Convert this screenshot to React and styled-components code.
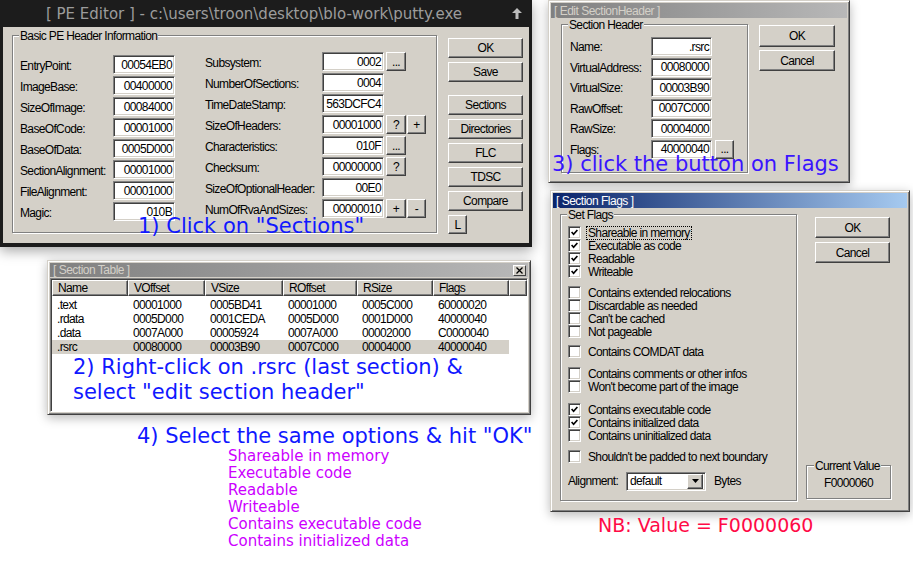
import React from 'react';
import styled, { createGlobalStyle } from 'styled-components';

const FACE = '#d4d0c8';
const SHADOW = '#808080';
const DARK = '#404040';

const GlobalStyle = createGlobalStyle`
  html, body { margin: 0; padding: 0; background: #fff; }
  body { font-family: "Liberation Sans", Arial, sans-serif; }
`;

const Desk = styled.div`
  position: relative;
  width: 913px;
  height: 563px;
  overflow: hidden;
  background: #fff;
  font-family: "Liberation Sans", Arial, sans-serif;
  font-size: 12px;
  letter-spacing: -0.65px;
  color: #000;
`;

// ---- window frames ----

const Window = styled.div`
  position: absolute;
  left: ${p => p.$x}px;
  top: ${p => p.$y}px;
  width: ${p => p.$w}px;
  height: ${p => p.$h}px;
  box-sizing: border-box;
  display: flex;
  flex-direction: column;
  background: ${FACE};
  border: 1px solid;
  border-color: ${FACE} ${DARK} ${DARK} ${FACE};
  box-shadow: inset 1px 1px #fff, inset -1px -1px ${SHADOW}, 0 3px 10px rgba(0, 0, 0, 0.28);
  padding: 2px;
`;

const TitleBar = styled.div`
  flex: none;
  height: ${p => p.$h || 15}px;
  margin-bottom: ${p => p.$mb || 0}px;
  display: flex;
  align-items: center;
  justify-content: space-between;
  padding: 0 2px 0 3px;
  background: ${p => (p.$active
    ? 'linear-gradient(90deg, #0a246a 0%, #a6caf0 100%)'
    : 'linear-gradient(90deg, #808080 0%, #b8b8b8 100%)')};
  color: ${p => (p.$active ? '#fff' : FACE)};
  font-size: 12px;
  letter-spacing: -0.5px;
  white-space: nowrap;
`;

const CloseBtn = styled.span`
  box-sizing: border-box;
  width: 13px;
  height: 11px;
  display: flex;
  align-items: center;
  justify-content: center;
  background: ${FACE};
  border: 1px solid;
  border-color: #fff ${DARK} ${DARK} #fff;
`;

const DarkWindow = styled.div`
  position: absolute;
  left: 0;
  top: 0;
  width: 532px;
  height: 247px;
  box-sizing: border-box;
  display: flex;
  flex-direction: column;
  background: #1c1c1c;
  padding: 0 3px 4px;
  box-shadow: 0 4px 12px rgba(0, 0, 0, 0.35);
`;

const DarkTitle = styled.div`
  height: 27px;
  flex: none;
  display: flex;
  align-items: center;
`;

const DarkTitleText = styled.span`
  flex: 1;
  text-align: center;
  font-family: "DejaVu Sans", sans-serif;
  font-size: 15px;
  letter-spacing: 0;
  color: #9c9c9c;
  white-space: nowrap;
`;

const TitleIcon = styled.span`
  width: 24px;
  flex: none;
  display: flex;
  justify-content: center;
`;

// ---- controls ----

const Group = styled.div`
  position: relative;
  box-sizing: border-box;
  flex: none;
  width: ${p => p.$w}px;
  height: ${p => p.$h}px;
  border: 1px solid ${SHADOW};
  box-shadow: inset 1px 1px #fff, 1px 1px #fff;
  padding: ${p => p.$pad || '0'};
  margin-top: ${p => p.$mt || 0}px;
`;

const Caption = styled.span`
  position: absolute;
  top: -6px;
  left: ${p => p.$left || 6}px;
  padding: 0 1px;
  background: ${FACE};
  line-height: 13px;
  white-space: nowrap;
`;

const Row = styled.div`
  display: flex;
  align-items: flex-start;
  height: ${p => p.$h || 21}px;
`;

const Label = styled.span`
  flex: none;
  width: ${p => p.$w}px;
  margin-top: ${p => p.$mt ?? 5}px;
  line-height: 13px;
  white-space: nowrap;
`;

const Field = styled.div`
  box-sizing: border-box;
  flex: none;
  width: ${p => p.$w || 62}px;
  height: 19px;
  display: flex;
  align-items: center;
  justify-content: ${p => (p.$left ? 'flex-start' : 'flex-end')};
  padding: 0 2px 0 3px;
  background: #fff;
  border: 1px solid;
  border-color: ${SHADOW} #fff #fff ${SHADOW};
  box-shadow: inset 1px 1px ${DARK}, inset -1px -1px ${FACE};
  white-space: nowrap;
`;

const Button = styled.button`
  box-sizing: border-box;
  flex: none;
  width: ${p => p.$w || 75}px;
  height: ${p => p.$h || 20}px;
  margin: ${p => p.$mt || 0}px 0 0 ${p => p.$ml || 0}px;
  padding: 0;
  display: flex;
  align-items: center;
  justify-content: center;
  font: inherit;
  letter-spacing: inherit;
  color: #000;
  background: ${FACE};
  border: 1px solid;
  border-color: #fff ${DARK} ${DARK} #fff;
  box-shadow: inset -1px -1px ${SHADOW};
  cursor: default;
`;

const Col = styled.div`
  display: flex;
  flex-direction: column;
  flex: none;
  width: ${p => (p.$w ? `${p.$w}px` : 'auto')};
  padding-top: ${p => p.$pt || 0}px;
  margin-left: ${p => p.$ml || 0}px;
  height: ${p => (p.$h ? `${p.$h}px` : 'auto')};
`;

const Body = styled.div`
  flex: 1;
  display: flex;
  align-items: flex-start;
  background: ${FACE};
  padding: ${p => p.$pad};
`;

const PEGroupInner = styled.div`
  display: flex;
`;

// ---- PE editor ----

const peLeft = [
  ['EntryPoint:', '00054EB0'],
  ['ImageBase:', '00400000'],
  ['SizeOfImage:', '00084000'],
  ['BaseOfCode:', '00001000'],
  ['BaseOfData:', '0005D000'],
  ['SectionAlignment:', '00001000'],
  ['FileAlignment:', '00001000'],
  ['Magic:', '010B'],
];

const peRight = [
  ['Subsystem:', '0002', ['...']],
  ['NumberOfSections:', '0004'],
  ['TimeDateStamp:', '563DCFC4'],
  ['SizeOfHeaders:', '00001000', ['?', '+']],
  ['Characteristics:', '010F', ['...']],
  ['Checksum:', '00000000', ['?']],
  ['SizeOfOptionalHeader:', '00E0'],
  ['NumOfRvaAndSizes:', '00000010', ['+', '-']],
];

const peButtons = [
  ['OK', 0], ['Save', 4], ['Sections', 13], ['Directories', 4],
  ['FLC', 4], ['TDSC', 4], ['Compare', 4],
];

function PEEditor() {
  return (
    <DarkWindow>
      <DarkTitle>
        <DarkTitleText>[ PE Editor ] - c:\users\troon\desktop\blo-work\putty.exe</DarkTitleText>
        <TitleIcon>
          <svg width="10" height="11" viewBox="0 0 10 11">
            <path d="M5 0 L10 5 H6.5 V11 H3.5 V5 H0 Z" fill="#bdbdbd" />
          </svg>
        </TitleIcon>
      </DarkTitle>
      <Body $pad="8px 0 0 9px">
        <Group $w={425} $h={198} $pad="16px 0 0 7px">
          <Caption $left={6}>Basic PE Header Information</Caption>
          <PEGroupInner>
            <Col $w={155} $pt={3}>
              {peLeft.map(([l, v]) => (
                <Row key={l}>
                  <Label $w={93}>{l}</Label>
                  <Field>{v}</Field>
                </Row>
              ))}
            </Col>
            <Col $ml={30}>
              {peRight.map(([l, v, btns]) => (
                <Row key={l}>
                  <Label $w={117}>{l}</Label>
                  <Field>{v}</Field>
                  {(btns || []).map((b, i) => (
                    <Button key={i} $w={i ? 19 : 20} $h={19} $ml={i ? 1 : 2}>{b}</Button>
                  ))}
                </Row>
              ))}
            </Col>
          </PEGroupInner>
        </Group>
        <Col $ml={11} $pt={3}>
          {peButtons.map(([b, mt]) => (
            <Button key={b} $mt={mt}>{b}</Button>
          ))}
          <Button $w={19} $h={19} $mt={4}>L</Button>
        </Col>
      </Body>
    </DarkWindow>
  );
}

// ---- Edit SectionHeader ----

const headerRows = [
  ['Name:', '.rsrc'],
  ['VirtualAddress:', '00080000'],
  ['VirtualSize:', '00003B90'],
  ['RawOffset:', '0007C000'],
  ['RawSize:', '00004000'],
  ['Flags:', '40000040', true],
];

function EditSectionHeader() {
  return (
    <Window $x={548} $y={0} $w={302} $h={183}>
      <TitleBar>[ Edit SectionHeader ]</TitleBar>
      <Body $pad="6px 0 0 10px">
        <Group $w={187} $h={149} $pad="12px 0 0 8px">
          <Caption>Section Header</Caption>
          {headerRows.map(([l, v, more]) => (
            <Row key={l} $h={20.6}>
              <Label $w={81} $mt={4}>{l}</Label>
              <Field $w={61}>{v}</Field>
              {more && <Button $w={19} $h={19} $ml={3}>...</Button>}
            </Row>
          ))}
        </Group>
        <Col $ml={11} $pt={1}>
          <Button $w={76} $h={22}>OK</Button>
          <Button $w={76} $h={21} $mt={3}>Cancel</Button>
        </Col>
      </Body>
    </Window>
  );
}

// ---- Section table ----

const Table = styled.div`
  flex: 1;
  margin-top: 1px;
  background: #fff;
  border: 1px solid;
  border-color: ${SHADOW} #fff #fff ${SHADOW};
  box-shadow: inset 1px 1px ${DARK};
  padding: 1px 0 0 1px;
`;

const COLS = '76px 77px 78px 74px 76px 76px 1fr';

const HeadRow = styled.div`
  display: grid;
  grid-template-columns: ${COLS};
  height: 16px;
`;

const HeadCell = styled.div`
  box-sizing: border-box;
  display: flex;
  align-items: center;
  padding-left: 5px;
  background: ${FACE};
  border: 1px solid;
  border-color: #fff ${DARK} ${DARK} #fff;
  box-shadow: inset -1px -1px ${SHADOW};
`;

const DataRow = styled.div`
  display: grid;
  grid-template-columns: ${COLS};
  height: 14px;
  align-items: center;
  margin-top: ${p => p.$mt || 0}px;
  background: ${p => (p.$sel ? `linear-gradient(90deg, ${FACE} 0, ${FACE} 457px, transparent 457px)` : 'transparent')};
`;

const DataCell = styled.span`
  padding-left: 5px;
  line-height: 14px;
  white-space: nowrap;
`;

const tableHead = ['Name', 'VOffset', 'VSize', 'ROffset', 'RSize', 'Flags', ''];
const tableRows = [
  ['.text', '00001000', '0005BD41', '00001000', '0005C000', '60000020'],
  ['.rdata', '0005D000', '0001CEDA', '0005D000', '0001D000', '40000040'],
  ['.data', '0007A000', '00005924', '0007A000', '00002000', 'C0000040'],
  ['.rsrc', '00080000', '00003B90', '0007C000', '00004000', '40000040'],
];

function SectionTable() {
  return (
    <Window $x={47} $y={260} $w={484} $h={155}>
      <TitleBar $h={14}>
        <span>[ Section Table ]</span>
        <CloseBtn>
          <svg width="7" height="7" viewBox="0 0 7 7">
            <path d="M0.5 0.5 L6.5 6.5 M6.5 0.5 L0.5 6.5" stroke="#000" strokeWidth="1.3" />
          </svg>
        </CloseBtn>
      </TitleBar>
      <Table>
        <HeadRow>
          {tableHead.map((h, i) => <HeadCell key={i}>{h}</HeadCell>)}
        </HeadRow>
        {tableRows.map((r, i) => (
          <DataRow key={r[0]} $mt={i ? 0 : 2} $sel={i === 3}>
            {r.map((c, j) => <DataCell key={j}>{c}</DataCell>)}
          </DataRow>
        ))}
      </Table>
    </Window>
  );
}

// ---- Section flags ----

const CheckRow = styled.div`
  display: flex;
  align-items: center;
  height: 13px;
`;

const FlagGroup = styled.div`
  margin-top: ${p => p.$mt || 0}px;
`;

const Box = styled.span`
  box-sizing: border-box;
  flex: none;
  width: 13px;
  height: 13px;
  display: flex;
  align-items: center;
  justify-content: center;
  background: #fff;
  border: 1px solid;
  border-color: ${SHADOW} #fff #fff ${SHADOW};
  box-shadow: inset 1px 1px ${DARK}, inset -1px -1px ${FACE};
`;

const CheckText = styled.span`
  margin-left: 6px;
  line-height: 12px;
  white-space: nowrap;
  outline: ${p => (p.$focus ? '1px dotted #000' : 'none')};
  padding: 0 1px;
`;

const AlignRow = styled.div`
  display: flex;
  align-items: center;
  margin-top: 8.5px;
`;

const Select = styled.div`
  box-sizing: border-box;
  width: 80px;
  height: 19px;
  display: flex;
  align-items: center;
  justify-content: space-between;
  padding: 0 2px 0 3px;
  background: #fff;
  border: 1px solid;
  border-color: ${SHADOW} #fff #fff ${SHADOW};
  box-shadow: inset 1px 1px ${DARK}, inset -1px -1px ${FACE};
`;

const DropBtn = styled.span`
  box-sizing: border-box;
  width: 16px;
  height: 15px;
  display: flex;
  align-items: center;
  justify-content: center;
  background: ${FACE};
  border: 1px solid;
  border-color: #fff ${DARK} ${DARK} #fff;
  box-shadow: inset -1px -1px ${SHADOW};
`;

const ValueText = styled.div`
  text-align: center;
  padding-top: 11px;
  line-height: 13px;
`;

const flagGroups = [
  [0, [['Shareable in memory', true, true], ['Executable as code', true], ['Readable', true], ['Writeable', true]]],
  [8, [['Contains extended relocations'], ['Discardable as needed'], ["Can't be cached"], ['Not pageable']]],
  [7, [['Contains COMDAT data']]],
  [9, [['Contains comments or other infos'], ["Won't become part of the image"]]],
  [10, [['Contains executable code', true], ['Contains initialized data', true], ['Contains uninitialized data']]],
  [8, [["Shouldn't be padded to next boundary"]]],
];

function Check() {
  return (
    <svg width="7" height="7" viewBox="0 0 7 7">
      <polyline points="0.6,3 2.6,5.2 6.4,1" fill="none" stroke="#000" strokeWidth="1.7" />
    </svg>
  );
}

function SectionFlags() {
  return (
    <Window $x={550} $y={190} $w={360} $h={322}>
      <TitleBar $active>[ Section Flags ]</TitleBar>
      <Body $pad="6px 0 0 7px">
        <Group $w={237} $h={287} $pad="11px 0 0 7px">
          <Caption>Set Flags</Caption>
          {flagGroups.map(([mt, items], gi) => (
            <FlagGroup key={gi} $mt={mt}>
              {items.map(([t, on, focus]) => (
                <CheckRow key={t}>
                  <Box>{on && <Check />}</Box>
                  <CheckText $focus={focus}>{t}</CheckText>
                </CheckRow>
              ))}
            </FlagGroup>
          ))}
          <AlignRow>
            <Label $w={58} $mt={0}>Alignment:</Label>
            <Select>
              <span>default</span>
              <DropBtn>
                <svg width="7" height="4" viewBox="0 0 7 4">
                  <path d="M0 0 H7 L3.5 4 Z" fill="#000" />
                </svg>
              </DropBtn>
            </Select>
            <Label $w={40} $mt={0} style={{ marginLeft: 8 }}>Bytes</Label>
          </AlignRow>
        </Group>
        <Col $ml={9} $w={85} $h={287}>
          <Button $ml={9} $h={21} $mt={3}>OK</Button>
          <Button $ml={9} $h={21} $mt={4}>Cancel</Button>
          <Group $w={85} $h={34} $mt={202}>
            <Caption $left={7}>Current Value</Caption>
            <ValueText>F0000060</ValueText>
          </Group>
        </Col>
      </Body>
    </Window>
  );
}

// ---- annotations ----

const Note = styled.div`
  position: absolute;
  left: ${p => p.$x}px;
  top: ${p => p.$y}px;
  font-family: "DejaVu Sans", sans-serif;
  font-size: ${p => p.$size || 21}px;
  line-height: ${p => p.$lh || 25}px;
  letter-spacing: 0;
  color: ${p => p.$color};
  white-space: nowrap;
`;

const BLUE = '#1018ff';

export default function App() {
  return (
    <Desk>
      <GlobalStyle />
      <PEEditor />
      <EditSectionHeader />
      <SectionTable />
      <SectionFlags />

      <Note $x={138} $y={214} $color={BLUE}>1) Click on "Sections"</Note>
      <Note $x={73} $y={355} $color={BLUE}>
        2) Right-click on .rsrc (last section) &amp;<br />
        select "edit section header"
      </Note>
      <Note $x={552} $y={152} $color="#3a14ff">3) click the button on Flags</Note>
      <Note $x={137} $y={424} $color={BLUE}>4) Select the same options &amp; hit "OK"</Note>
      <Note $x={228} $y={448} $size={15} $lh={17} $color="#cc00ff">
        Shareable in memory<br />
        Executable code<br />
        Readable<br />
        Writeable<br />
        Contains executable code<br />
        Contains initialized data
      </Note>
      <Note $x={598} $y={513} $size={19} $color="#ff0a46">NB: Value = F0000060</Note>
    </Desk>
  );
}
